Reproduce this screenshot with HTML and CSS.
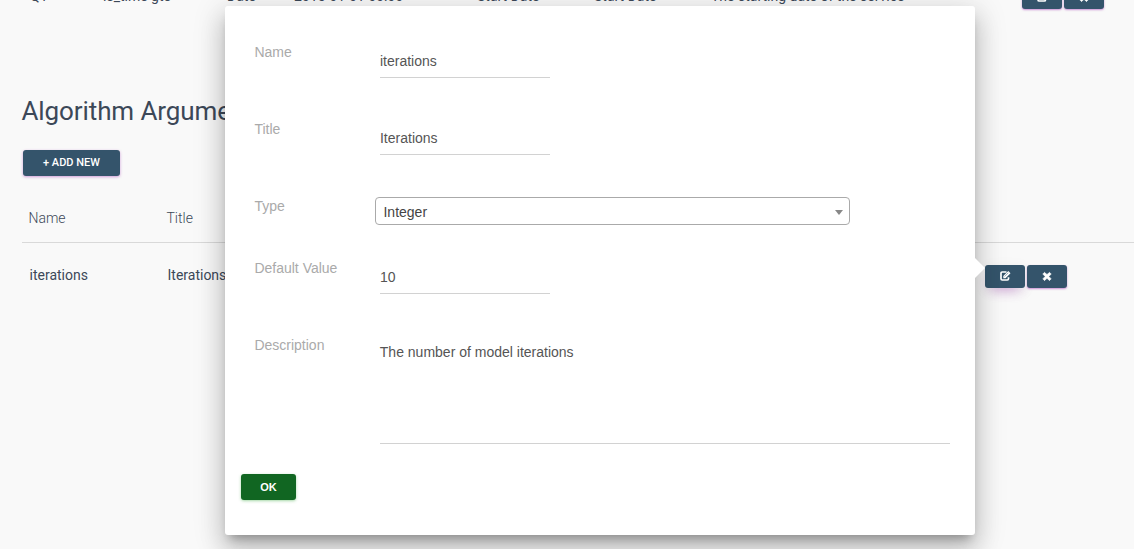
FILE: index.html
```html
<!DOCTYPE html>
<html lang="en">
<head>
<meta charset="utf-8">
<title>Algorithm Arguments</title>
<link rel="stylesheet" href="styles.css">
</head>
<body>
<svg class="sprite" aria-hidden="true">
  <symbol id="edit" viewBox="0 0 12 12"><path d="M7.500 2H3.200Q2 2 2 3.200V8.800Q2 10 3.200 10H8.300Q9.500 10 9.500 8.800V7.200" fill="none" stroke="currentColor" stroke-width="1.700"/><path d="M4.300 8.200V6L9.300 1L11.500 3.200L6.500 8.200Z"/><path d="M5.600 6.500L9.400 2.700" fill="none" stroke="#34546b" stroke-width=".5"/></symbol>
  <symbol id="remove" viewBox="0 0 1792 1792"><path d="M1490 1322q0 40-28 68l-136 136q-28 28-68 28t-68-28l-294-294-294 294q-28 28-68 28t-68-28l-136-136q-28-28-28-68t28-68l294-294-294-294q-28-28-28-68t28-68l136-136q28-28 68-28t68 28l294 294 294-294q28-28 68-28t68 28l136 136q28 28 28 68t-28 68l-294 294 294 294q28 28 28 68z" stroke="currentColor" stroke-width="90"/></symbol>
</svg>
<main class="page">
  <div class="row row-inputs">
    <span class="identifier">Q1</span><span class="format">is_time gte</span><span class="kind">Date</span><span class="default">2015-01-01 00:00</span><span class="label">Start Date</span><span class="label">Start Date</span><span class="description">The starting date of the service</span>
    <div class="actions">
      <button class="icon-btn"><svg><use href="#edit"/></svg></button>
      <button class="icon-btn"><svg><use href="#remove"/></svg></button>
    </div>
  </div>
  <h2 class="heading">Algorithm Arguments</h2>
  <button class="btn add">+ ADD NEW</button>
  <div class="row row-head"><span class="name">Name</span><span>Title</span></div>
  <div class="row row-argument">
    <span class="name">iterations</span><span class="title">Iterations</span>
    <div class="actions">
      <button class="icon-btn focused"><svg><use href="#edit"/></svg></button>
      <button class="icon-btn"><svg><use href="#remove"/></svg></button>
    </div>
  </div>
</main>
<form class="popover">
  <div class="field"><label>Name</label><div class="input">iterations</div></div>
  <div class="field"><label>Title</label><div class="input">Iterations</div></div>
  <div class="field field-type"><label>Type</label><div class="select"><span>Integer</span><i class="caret"></i></div></div>
  <div class="field"><label>Default Value</label><div class="input">10</div></div>
  <div class="field field-description"><label>Description</label><div class="input textarea">The number of model iterations</div></div>
  <button type="button" class="btn ok">OK</button>
</form>
</body>
</html>
```
FILE: styles.css
```css
* { box-sizing: border-box; }
body {
  margin: 0;
  height: 549px;
  overflow: hidden;
  background: #f9f9f9;
  color: #3c4858;
  font: 14px/20px Roboto, sans-serif;
}
.sprite { display: none; }
.page { display: flow-root; padding-left: 22px; }
.row { display: flex; align-items: center; white-space: nowrap; }
.row-inputs { height: 23px; margin-top: -14px; padding-left: 8px; }
.row-inputs > span, .row-argument > span { padding-bottom: 4px; }
.identifier { width: 73px; }
.format { width: 124px; }
.kind { width: 67px; }
.default { width: 183px; }
.label { width: 117px; }
.actions { display: flex; gap: 2px; margin-left: auto; }
.row-inputs .actions { margin-right: 30px; }
.row-argument .actions { margin-right: 67px; }
.heading { margin: 85px 0 0 -.5px; font-size: 26px; line-height: 34px; font-weight: 400; letter-spacing: -.1px; }
.btn {
  display: block;
  height: 26px;
  padding: 0;
  border: 0;
  border-radius: 3px;
  color: #fff;
  font-size: 11px;
  line-height: 24px;
}
.add { width: 97px; margin: 22px 0 0 1px; background: #34546b; font-family: Roboto, sans-serif; font-weight: 500; box-shadow: 0 1px 3px rgba(156, 39, 176, .45); }
.row-head { height: 67px; padding: 17px 0 0 6.5px; border-bottom: 1px solid #d9d9d9; font-weight: 300; }
.name { width: 138px; }
.row-argument { height: 23px; margin-top: 22px; padding-left: 7.5px; }
.icon-btn {
  display: flex;
  align-items: center;
  justify-content: center;
  width: 40px;
  height: 23px;
  padding: 0 1px 1px 0;
  border: 0;
  border-radius: 3px;
  background: #34546b;
  color: #fff;
  box-shadow: 0 1px 2px rgba(156, 39, 176, .5);
}
.icon-btn svg { width: 12px; height: 12px; fill: currentColor; }
.focused { box-shadow: 0 7px 13px -6px rgba(156, 39, 176, .45), 0 3px 14px rgba(0, 0, 0, .07); }
.popover {
  position: absolute;
  left: 225px;
  top: 6px;
  width: 750px;
  height: 529px;
  padding: 36px 25px 0 16px;
  border-radius: 3px;
  background: #fff;
  font-family: "Liberation Sans", Arial, sans-serif;
  box-shadow: 0 16px 24px 2px rgba(0, 0, 0, .14), 0 6px 30px 5px rgba(0, 0, 0, .12), 0 8px 10px -5px rgba(0, 0, 0, .3);
}
.popover::after {
  content: "";
  position: absolute;
  left: 100%;
  top: 252px;
  border: 10px solid transparent;
  border-left-color: #fff;
  border-right: 0;
}
.field { display: flex; height: 77px; padding-left: 13.4px; }
.field label { width: 125.600px; color: #aaa; }
.input { width: 170px; height: 36px; padding-top: 9px; border-bottom: 1px solid #d2d2d2; color: #555; }
.field-type { height: 62px; }
.select {
  display: flex;
  align-items: center;
  justify-content: space-between;
  width: 475px;
  height: 28px;
  margin: 1px 0 0 -5px;
  padding: 2px 6px 0 7.5px;
  border: 1px solid #aaa;
  border-radius: 4px;
  color: #444;
}
.caret { border: 4px solid transparent; border-top: 5px solid #888; border-bottom: 0; }
.field-description { height: 139px; }
.textarea { width: 571px; height: 109px; padding-top: 7px; }
.ok { width: 55px; background: #116622; font-family: "Liberation Sans", Arial, sans-serif; font-weight: 700; line-height: 26px; box-shadow: 0 1px 3px rgba(76, 175, 80, .5); }
```
